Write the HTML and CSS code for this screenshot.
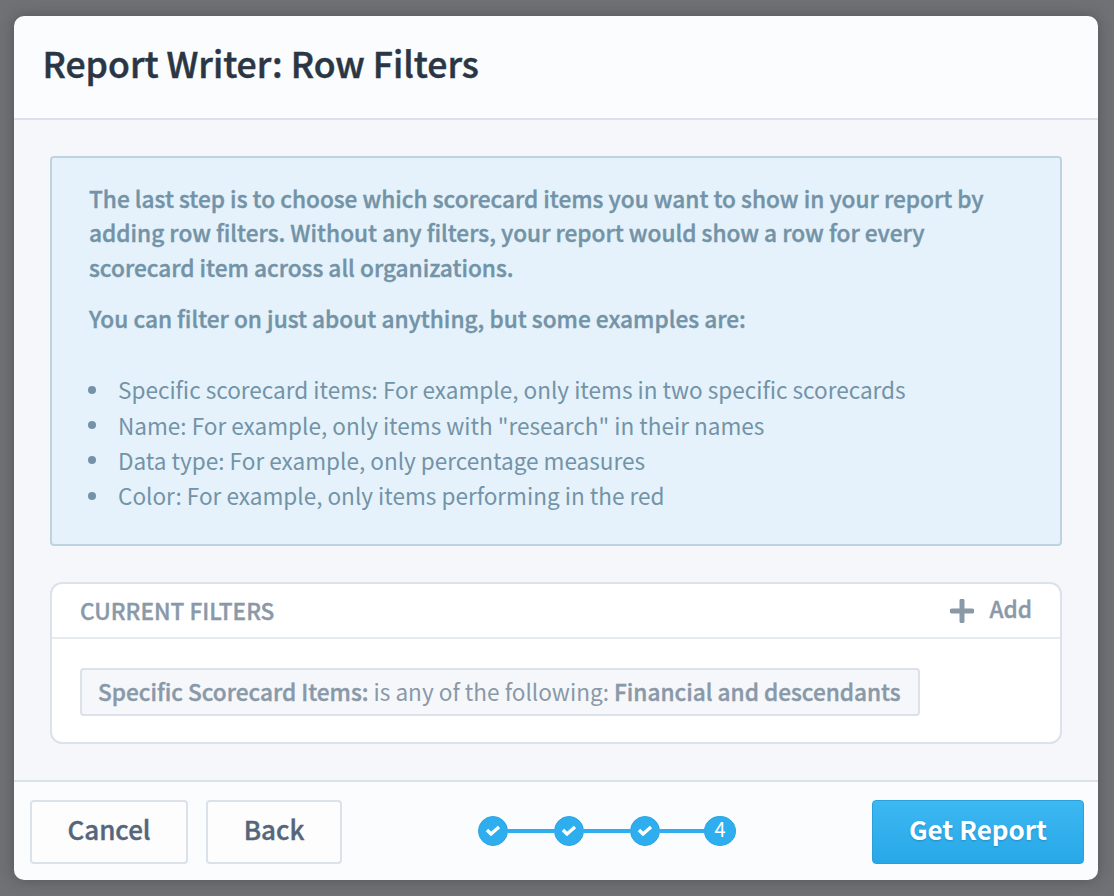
FILE: index.html
```html
<!DOCTYPE html>
<html lang="en">
<head>
<meta charset="utf-8">
<title>Report Writer: Row Filters</title>
<link rel="stylesheet" href="styles.css">
</head>
<body>
<div class="dialog">
  <header class="head"><h1>Report Writer: Row Filters</h1></header>
  <main class="content">
    <section class="info">
      <p>The last step is to choose which scorecard items you want to show in your report by adding row filters. Without any filters, your report would show a row for every scorecard item across all organizations.</p>
      <p class="sub">You can filter on just about anything, but some examples are:</p>
      <ul>
        <li>Specific scorecard items: For example, only items in two specific scorecards</li>
        <li>Name: For example, only items with "research" in their names</li>
        <li>Data type: For example, only percentage measures</li>
        <li>Color: For example, only items performing in the red</li>
      </ul>
    </section>
    <section class="filters">
      <div class="filters-head">
        <span class="filters-title">CURRENT FILTERS</span>
        <span class="add">
          <svg class="plus" width="24" height="24" viewBox="0 0 24 24"><path d="M12 2v20M2 12h20" stroke="#8a99a8" stroke-width="5" stroke-linecap="round" fill="none"/></svg>
          <span class="add-label">Add</span>
        </span>
      </div>
      <div class="filters-body">
        <span class="chip"><b>Specific Scorecard Items:</b> is any of the following: <b>Financial and descendants</b></span>
      </div>
    </section>
  </main>
  <footer class="foot">
    <div class="btns">
      <button class="btn cancel">Cancel</button>
      <button class="btn back">Back</button>
    </div>
    <div class="steps">
      <span class="dot"><svg width="18" height="14" viewBox="0 0 18 14"><path d="M3 7l4 4 8-7" stroke="#fff" stroke-width="3.4" fill="none"/></svg></span>
      <span class="line"></span>
      <span class="dot"><svg width="18" height="14" viewBox="0 0 18 14"><path d="M3 7l4 4 8-7" stroke="#fff" stroke-width="3.4" fill="none"/></svg></span>
      <span class="line"></span>
      <span class="dot"><svg width="18" height="14" viewBox="0 0 18 14"><path d="M3 7l4 4 8-7" stroke="#fff" stroke-width="3.4" fill="none"/></svg></span>
      <span class="line short"></span>
      <span class="dot num">4</span>
    </div>
    <button class="btn primary">Get Report</button>
  </footer>
</div>
</body>
</html>
```
FILE: styles.css
```css
* { box-sizing: border-box; }
html, body { height: 100%; }
body {
  margin: 0;
  padding: 16px 16px 16px 14px;
  background: #6f7174;
  font-family: "Noto Sans CJK SC", "Noto Sans", sans-serif;
  overflow: hidden;
}
.dialog {
  width: 1084px;
  height: 864px;
  border-radius: 10px;
  overflow: hidden;
  background: #fbfcfe;
  display: flex;
  flex-direction: column;
  box-shadow: 0 0 14px rgba(50, 52, 56, .45);
}
.head {
  height: 104px;
  border-bottom: 2px solid #dbe2ea;
  padding: 0 28.5px;
  display: flex;
  align-items: center;
}
.head h1 {
  margin: 0 0 9px;
  font-size: 35.6px;
  line-height: 44px;
  font-weight: 500;
  -webkit-text-stroke: .5px #2a3644;
  color: #2a3644;
}
.content {
  flex: 1;
  background: #f5f7fb;
  padding: 36px;
  display: flex;
  flex-direction: column;
  gap: 36px;
}
.info {
  height: 390px;
  background: #e5f2fb;
  border: 2px solid #bdd3e0;
  border-radius: 4px;
  padding: 24px 37px;
  color: #7393a7;
  font-size: 22.55px;
  line-height: 34.3px;
}
.info p {
  margin: 0;
  font-size: 22.65px;
  font-weight: 500;
  -webkit-text-stroke: .4px #7393a7;
}
.info .sub { margin-top: 17.4px; }
.info ul {
  margin: 35.8px 0 0;
  padding: 0;
  list-style: none;
  line-height: 35.2px;
}
.info li { display: flex; align-items: center; gap: 22px; margin-left: -1px; }
.info li::before {
  content: "";
  flex: none;
  width: 8px;
  height: 8px;
  border-radius: 50%;
  background: #7393a7;
}
.filters {
  height: 162px;
  background: #fff;
  border: 2px solid #dbe2ea;
  border-radius: 12px;
}
.filters-head {
  height: 55px;
  border-bottom: 2px solid #e6ebf0;
  padding: 0 28px;
  display: flex;
  justify-content: space-between;
  align-items: center;
  color: #8a99a8;
  font-size: 22.6px;
  font-weight: 500;
  -webkit-text-stroke: .4px #8a99a8;
}
.filters-title { margin-top: -1px; }
.add { display: flex; align-items: center; gap: 15px; }
.add-label { margin-top: -4px; }
.plus { display: block; margin-left: -2px; }
.filters-body { padding: 29px 28px; }
.chip {
  display: inline-block;
  height: 48px;
  line-height: 43px;
  padding: 0 17px 0 16px;
  background: #f5f7fb;
  border: 2px solid #dbe2ea;
  border-radius: 4px;
  color: #8a99a8;
  font-size: 22.6px;
}
.chip b { font-weight: 500; -webkit-text-stroke: .4px #8a99a8; }
.foot {
  height: 100px;
  border-top: 2px solid #dbe2ea;
  padding: 2px 14px 0 16px;
  display: flex;
  justify-content: space-between;
  align-items: center;
}
.btns { display: flex; gap: 18px; }
.btn {
  height: 64px;
  font-family: inherit;
  font-size: 26px;
  line-height: 30px;
  padding: 0 0 6px;
  font-weight: 500;
  -webkit-text-stroke: .4px #55667a;
  border-radius: 4px;
  background: #fdfdfe;
  border: 2px solid #dbe2ea;
  color: #55667a;
}
.cancel { width: 158px; }
.back { width: 136px; }
.primary {
  width: 212px;
  background: linear-gradient(#3cb8f2, #28a8e8);
  border: 1px solid #2a9fd8;
  color: #fff;
  font-weight: 700;
  -webkit-text-stroke: 0;
  text-shadow: 0 1px 2px rgba(20, 90, 140, .4);
}
.steps { display: flex; align-items: center; margin-top: -2px; }
.dot {
  width: 30px;
  height: 30px;
  border-radius: 50%;
  background: #2eaeee;
  border: 1px solid #2ba5e2;
  color: #fff;
  display: flex;
  align-items: center;
  justify-content: center;
  font-size: 20px;
  line-height: 22px;
}
.dot svg { display: block; margin-top: -2px; }
.dot.num { width: 32px; padding-bottom: 4px; }
.line { width: 46px; height: 4px; background: #2eaeee; }
.line.short { width: 44px; }
```
